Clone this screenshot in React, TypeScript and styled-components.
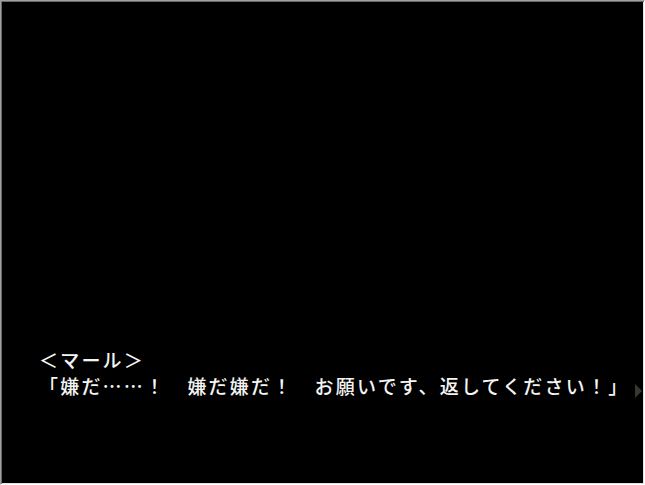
import styled, { createGlobalStyle } from 'styled-components';

const GlobalStyle = createGlobalStyle`
  html, body {
    margin: 0;
    padding: 0;
    background: #ffffff;
  }
  * {
    box-sizing: border-box;
  }
`;

const Screen = styled.div`
  position: relative;
  width: 645px;
  height: 485px;
  background: #000000;
  border-top: 1px solid #a0a0a0;
  border-left: 1px solid #a0a0a0;
  border-right: 1px solid #ffffff;
  border-bottom: 1px solid #ffffff;
  box-shadow: inset 1px 1px 0 #696969, inset -1px -1px 0 #e3e3e3;
  display: flex;
  flex-direction: column;
  justify-content: flex-end;
  padding: 0 0 85px 38px;
`;

const MessageBox = styled.div`
  display: flex;
  flex-direction: column;
  color: #f4f4f4;
  font-family: 'Noto Sans CJK JP', 'Noto Sans', sans-serif;
  font-size: 19px;
  font-weight: 500;
  line-height: 26px;
  letter-spacing: 2.2px;
  white-space: pre;
`;

const Speaker = styled.div`
  padding-left: 0;
`;

const Line = styled.div``;

const NextMarker = styled.div`
  position: absolute;
  right: 2px;
  top: 383px;
  width: 0;
  height: 0;
  border-top: 7.5px solid transparent;
  border-bottom: 7.5px solid transparent;
  border-left: 7px solid #3a3632;
`;

export default function App() {
  return (
    <>
      <GlobalStyle />
      <Screen>
        <MessageBox>
          <Speaker>＜マール＞</Speaker>
          <Line>「嫌だ……！　嫌だ嫌だ！　お願いです、返してください！」</Line>
        </MessageBox>
        <NextMarker />
      </Screen>
    </>
  );
}
